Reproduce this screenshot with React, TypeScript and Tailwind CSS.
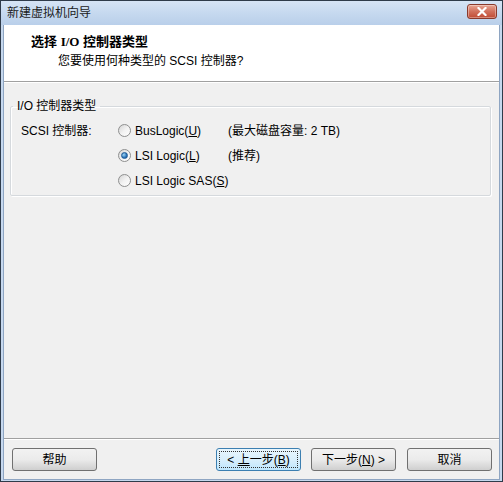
import React from "react";

const font = "font-['Liberation_Sans','Noto_Sans_CJK_SC',sans-serif]";

function Radio({ checked }: { checked?: boolean }) {
  return (
    <span className="relative flex h-[13px] w-[13px] items-center justify-center rounded-full border border-[#8e8f8f] bg-gradient-to-br from-[#d4d4d4] via-[#f2f2f2] to-white">
      {checked && (
        <span className="h-[7px] w-[7px] rounded-full bg-[radial-gradient(circle_at_35%_35%,#9fd6f6,#2b74b8_60%,#1a4f8a)] border border-[#1e5a96]" />
      )}
    </span>
  );
}

function Btn({ children, focused }: { children: React.ReactNode; focused?: boolean }) {
  return (
    <div
      className={
        focused
          ? "flex h-[23px] w-[85px] items-center justify-center rounded-[3px] border border-[#3c7fb1] bg-gradient-to-b from-[#e9f6fd] via-[#d9effc] to-[#bee6fd] p-[2px]"
          : "flex h-[23px] w-[85px] items-center justify-center rounded-[3px] border border-[#707070] bg-gradient-to-b from-[#f2f2f2] via-[#ebebeb] to-[#cfcfcf] p-[2px]"
      }
    >
      <div
        className={
          focused
            ? "flex h-full w-full items-center justify-center whitespace-pre border border-dotted border-[#333] text-[12px] leading-none"
            : "flex h-full w-full items-center justify-center whitespace-pre text-[12px] leading-none"
        }
      >
        {children}
      </div>
    </div>
  );
}

export default function App() {
  return (
    <div className={`${font} flex h-[482px] w-[503px] flex-col border border-[#2f3b4a] bg-[#c6d8ee] text-black`}>
      {/* title bar */}
      <div className="flex h-[24px] items-center justify-between bg-gradient-to-b from-[#d6e4f5] via-[#c6d9ef] to-[#b9cfea] pl-[6px] pr-[5px]">
        <span className="text-[12px] text-[#1b1b1b]">新建虚拟机向导</span>
        <div className="mb-[3px] flex h-[15px] w-[30px] items-center justify-center rounded-[3px] border border-[#8a3a2c] bg-gradient-to-b from-[#e8a593] via-[#d1705c] to-[#c04a32] shadow-[inset_0_0_0_1px_rgba(255,255,255,0.35)]">
          <svg width="10" height="9" viewBox="0 0 10 9">
            <path d="M1.5 1 L8.5 8 M8.5 1 L1.5 8" stroke="#fff" strokeWidth="2.2" strokeLinecap="square" />
          </svg>
        </div>
      </div>
      {/* client */}
      <div className="mx-[2px] mb-[1px] flex flex-1 flex-col border-l border-r border-b border-[#8ea5c2] bg-[#f0f0f0]">
        <div className="flex h-[57px] flex-col border-b border-[#a0a0a0] bg-white">
          <div className="mt-[8px] pl-[27px] text-[13px] font-bold leading-[18px]">
            选择 <span className="font-['Liberation_Serif',serif]">I/O</span> 控制器类型
          </div>
          <div className="mt-[1px] pl-[54px] text-[12px] leading-[18px]">您要使用何种类型的 SCSI 控制器?</div>
        </div>
        <div className="flex flex-1 flex-col border-t border-white">
          <fieldset className="ml-[6px] mr-[8px] mt-[15px] rounded-[2px] border border-[#d5d9dd] shadow-[inset_1px_1px_0_#fff,1px_1px_0_#fff]">
            <legend className="ml-[2px] px-[4px] text-[12px] leading-[16px]">I/O 控制器类型</legend>
            <div className="mt-[4px] mb-[2px] flex flex-col pl-[10px] text-[12px]">
              <div className="flex h-[25px] items-center">
                <span className="w-[97px]">SCSI 控制器:</span>
                <div className="flex w-[110px] items-center gap-[4px]">
                  <Radio />
                  <span>
                    BusLogic(<u>U</u>)
                  </span>
                </div>
                <span>(最大磁盘容量: 2 TB)</span>
              </div>
              <div className="flex h-[25px] items-center">
                <span className="w-[97px]" />
                <div className="flex w-[110px] items-center gap-[4px]">
                  <Radio checked />
                  <span>
                    LSI Logic(<u>L</u>)
                  </span>
                </div>
                <span>(推荐)</span>
              </div>
              <div className="flex h-[25px] items-center">
                <span className="w-[97px]" />
                <div className="flex items-center gap-[4px]">
                  <Radio />
                  <span>
                    LSI Logic SAS(<u>S</u>)
                  </span>
                </div>
              </div>
            </div>
          </fieldset>
        </div>
        <div className="flex h-[41px] items-start border-t border-[#a0a0a0] pl-[8px] pr-[7px] pt-[9px] shadow-[inset_0_1px_0_#fff]">
          <Btn>帮助</Btn>
          <div className="flex-1" />
          <Btn focused>
            {"< "}
            <u>上</u>一步(<u>B</u>)
          </Btn>
          <div className="w-[10px]" />
          <Btn>
            下一步(<u>N</u>){" >"}
          </Btn>
          <div className="w-[11px]" />
          <Btn>取消</Btn>
        </div>
      </div>
    </div>
  );
}
